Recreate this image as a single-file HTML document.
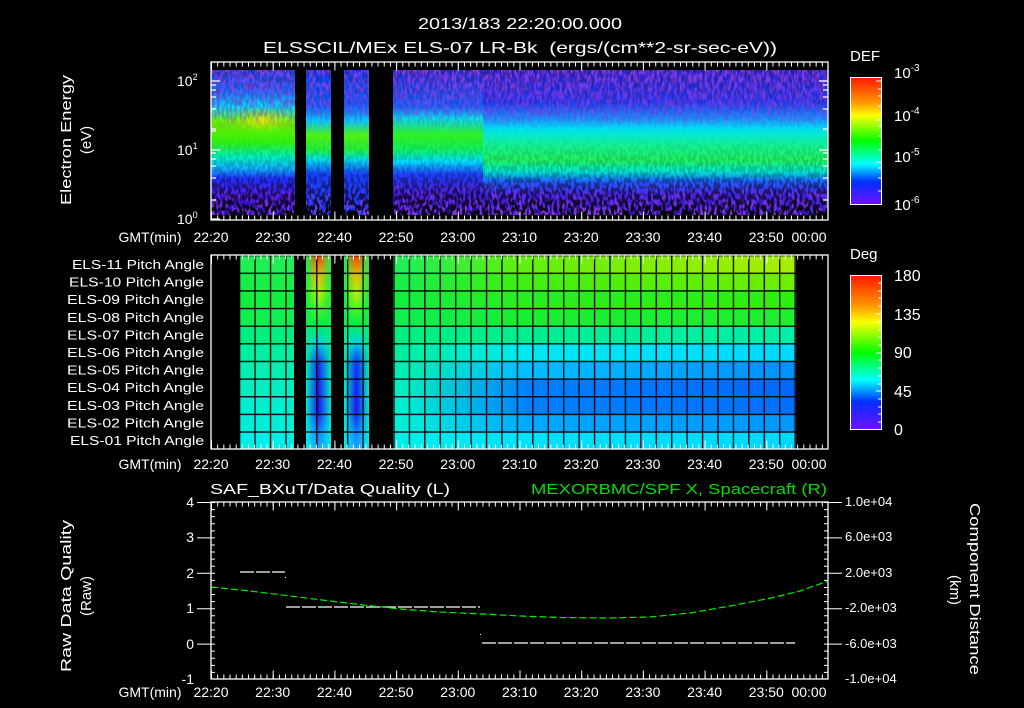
<!DOCTYPE html>
<html><head><meta charset="utf-8"><style>
html,body{margin:0;padding:0;background:#000;width:1024px;height:708px;overflow:hidden}
svg{display:block}
text{font-family:"Liberation Sans",sans-serif;fill:#fff}
</style></head><body>
<svg width="1024" height="708" viewBox="0 0 1024 708" xmlns="http://www.w3.org/2000/svg">
<defs>
<linearGradient id="cb" x1="0" y1="0" x2="0" y2="1">
<stop offset="0" stop-color="#ff1800"/><stop offset="0.2" stop-color="#ff9900"/><stop offset="0.3" stop-color="#ffff00"/>
<stop offset="0.5" stop-color="#00ff00"/><stop offset="0.68" stop-color="#00ffff"/><stop offset="0.82" stop-color="#0030ff"/>
<stop offset="1" stop-color="#7010ff"/></linearGradient>
<linearGradient id="sL" x1="0" y1="70" x2="0" y2="215" gradientUnits="userSpaceOnUse">
<stop offset="0" stop-color="#2a40f0"/><stop offset="0.15" stop-color="#1a70ff"/><stop offset="0.25" stop-color="#00e0ff"/>
<stop offset="0.36" stop-color="#70f000"/><stop offset="0.5" stop-color="#30f010"/><stop offset="0.6" stop-color="#00f0c0"/>
<stop offset="0.68" stop-color="#10b0ff"/><stop offset="0.75" stop-color="#2030ff"/><stop offset="0.88" stop-color="#3a10d0"/><stop offset="1" stop-color="#3010b0"/></linearGradient>
<linearGradient id="sM" x1="0" y1="70" x2="0" y2="215" gradientUnits="userSpaceOnUse">
<stop offset="0" stop-color="#1a40ff"/><stop offset="0.25" stop-color="#1060ff"/><stop offset="0.35" stop-color="#00d0ff"/>
<stop offset="0.45" stop-color="#50f010"/><stop offset="0.55" stop-color="#20f040"/><stop offset="0.62" stop-color="#00e0f0"/>
<stop offset="0.72" stop-color="#1840ff"/><stop offset="1" stop-color="#1030e0"/></linearGradient>
<linearGradient id="sR2" x1="0" y1="70" x2="0" y2="215" gradientUnits="userSpaceOnUse">
<stop offset="0" stop-color="#3528d8"/><stop offset="0.22" stop-color="#2838f0"/><stop offset="0.33" stop-color="#1890ff"/>
<stop offset="0.4" stop-color="#00e0f8"/><stop offset="0.5" stop-color="#10f0a0"/><stop offset="0.62" stop-color="#20f060"/><stop offset="0.7" stop-color="#00e8d0"/>
<stop offset="0.77" stop-color="#1a60ff"/><stop offset="0.86" stop-color="#3a20e0"/><stop offset="1" stop-color="#3510b0"/></linearGradient>
<linearGradient id="sC" x1="0" y1="70" x2="0" y2="215" gradientUnits="userSpaceOnUse">
<stop offset="0" stop-color="#3030e0"/><stop offset="0.25" stop-color="#1a60ff"/><stop offset="0.33" stop-color="#00e0f0"/>
<stop offset="0.45" stop-color="#30f020"/><stop offset="0.55" stop-color="#10f060"/><stop offset="0.63" stop-color="#00e0ff"/>
<stop offset="0.72" stop-color="#2040ff"/><stop offset="0.86" stop-color="#3a18d0"/><stop offset="1" stop-color="#3010b0"/></linearGradient>
<radialGradient id="yel" cx="0.5" cy="0.5" r="0.5"><stop offset="0" stop-color="#f0f000" stop-opacity="0.95"/><stop offset="1" stop-color="#a0f000" stop-opacity="0"/></radialGradient>
<filter id="spk" x="0" y="0" width="1" height="1">
<feTurbulence type="fractalNoise" baseFrequency="0.35 0.18" numOctaves="1" seed="3"/>
<feColorMatrix type="matrix" values="0 0 0 0 0  0 0 0 0 0  0 0 0 0 0  0 0 0 -9 5"/>
</filter>
<filter id="spk2" x="0" y="0" width="1" height="1">
<feTurbulence type="fractalNoise" baseFrequency="0.4 0.12" numOctaves="1" seed="11"/>
<feColorMatrix type="matrix" values="0 0 0 0 0.3  0 0 0 0 0.05  0 0 0 0 0.85  0 0 0 -10 5.5"/>
</filter>
<linearGradient id="spm" x1="0" y1="0" x2="0" y2="1"><stop offset="0" stop-color="#fff" stop-opacity="0.25"/><stop offset="0.45" stop-color="#fff" stop-opacity="0"/><stop offset="0.72" stop-color="#fff" stop-opacity="0.2"/><stop offset="1" stop-color="#fff" stop-opacity="1"/></linearGradient>
<mask id="spmask"><rect x="211" y="70" width="617" height="145" fill="url(#spm)"/></mask>
<linearGradient id="spm2" x1="0" y1="0" x2="0" y2="1"><stop offset="0" stop-color="#fff" stop-opacity="0.8"/><stop offset="0.3" stop-color="#fff" stop-opacity="0.4"/><stop offset="0.42" stop-color="#fff" stop-opacity="0"/><stop offset="0.75" stop-color="#fff" stop-opacity="0"/><stop offset="0.85" stop-color="#fff" stop-opacity="0.4"/><stop offset="1" stop-color="#fff" stop-opacity="0.8"/></linearGradient>
<mask id="spmask2"><rect x="211" y="70" width="617" height="145" fill="url(#spm2)"/></mask>
<linearGradient id="pstripe" x1="0" y1="255" x2="0" y2="449" gradientUnits="userSpaceOnUse">
<stop offset="0" stop-color="#ff3000"/><stop offset="0.1" stop-color="#ffb000"/><stop offset="0.2" stop-color="#c0f000"/>
<stop offset="0.35" stop-color="#00f040"/><stop offset="0.45" stop-color="#00d0f0"/><stop offset="0.55" stop-color="#1030ff"/>
<stop offset="0.8" stop-color="#2010ee"/><stop offset="0.92" stop-color="#1080ff"/><stop offset="1" stop-color="#20a0ff"/></linearGradient>
<linearGradient id="hm" x1="0" y1="0" x2="1" y2="0"><stop offset="0" stop-color="#fff" stop-opacity="0"/><stop offset="0.5" stop-color="#fff"/><stop offset="1" stop-color="#fff" stop-opacity="0"/></linearGradient>
<mask id="m1"><rect x="306" y="255" width="25" height="194" fill="url(#hm)"/></mask>
<mask id="m2"><rect x="344" y="255" width="25" height="194" fill="url(#hm)"/></mask>
<pattern id="grid" x="239" y="255" width="15.43" height="17.64" patternUnits="userSpaceOnUse">
<rect x="0" y="0" width="1.3" height="17.64" fill="#000"/><rect x="0" y="0" width="15.43" height="1.3" fill="#000"/></pattern>
</defs>

<text x="418" y="29" font-size="16" textLength="204" lengthAdjust="spacingAndGlyphs">2013/183 22:20:00.000</text>
<text x="263" y="53" font-size="16" textLength="514" lengthAdjust="spacingAndGlyphs" xml:space="preserve">ELSSCIL/MEx ELS-07 LR-Bk  (ergs/(cm**2-sr-sec-eV))</text>

<!-- Panel 1 -->
<rect x="211" y="70" width="84" height="145" fill="url(#sL)"/>
<ellipse cx="262" cy="120" rx="34" ry="13" fill="url(#yel)"/>
<rect x="306" y="70" width="25" height="145" fill="url(#sM)"/>
<rect x="344" y="70" width="25" height="145" fill="url(#sM)"/>
<rect x="393" y="70" width="90" height="145" fill="url(#sC)"/>
<rect x="483" y="70" width="345" height="145" fill="url(#sR2)"/>
<rect x="211" y="70" width="617" height="145" filter="url(#spk2)" mask="url(#spmask2)"/>
<rect x="211" y="70" width="617" height="145" filter="url(#spk)" mask="url(#spmask)"/>
<rect x="295" y="66" width="11" height="152" fill="#000"/>
<rect x="331" y="66" width="13" height="152" fill="#000"/>
<rect x="369" y="66" width="24" height="152" fill="#000"/>
<rect x="211" y="62" width="617" height="158" fill="none" stroke="#fff" stroke-width="1.3"/>
<line x1="211" y1="64" x2="828" y2="64" stroke="#fff" stroke-width="5" stroke-dasharray="1 5.17"/>
<line x1="211" y1="66" x2="828" y2="66" stroke="#fff" stroke-width="9" stroke-dasharray="1 60.7"/>
<line x1="211" y1="218" x2="828" y2="218" stroke="#fff" stroke-width="5" stroke-dasharray="1 5.17"/>
<line x1="211" y1="216" x2="828" y2="216" stroke="#fff" stroke-width="9" stroke-dasharray="1 60.7"/>
<g stroke="#fff" stroke-width="1.2">
<path d="M211 81h9M211 150h9M211 219h9M211 200h5M211 178h5M211 166h5M211 159h5M211 153h5M211 129h5M211 109h5M211 97h5M211 90h5M211 85h5M211 131h5"/>
<path d="M828 81h-9M828 150h-9M828 200h-5M828 178h-5M828 166h-5M828 159h-5M828 153h-5M828 129h-5M828 109h-5M828 97h-5M828 90h-5M828 85h-5"/>
</g>
<text x="177" y="86" font-size="14">10<tspan font-size="9" dy="-6">2</tspan></text>
<text x="177" y="155" font-size="14">10<tspan font-size="9" dy="-6">1</tspan></text>
<text x="177" y="224" font-size="14">10<tspan font-size="9" dy="-6">0</tspan></text>
<text transform="translate(71,140) rotate(-90)" text-anchor="middle" font-size="15" textLength="130" lengthAdjust="spacingAndGlyphs">Electron Energy</text>
<text transform="translate(91,140) rotate(-90)" text-anchor="middle" font-size="15">(eV)</text>

<text x="850" y="61" font-size="15">DEF</text>
<rect x="850.5" y="77.5" width="31" height="127" fill="url(#cb)" stroke="#fff" stroke-width="1"/>
<g stroke="#fff" stroke-width="1"><path d="M882 81h-6M882 89h-4M882 96h-4M882 106h-4M882 120h-6M882 126h-4M882 136h-4M882 150h-4M882 162h-6M882 168h-4M882 178h-4M882 191h-4"/></g>
<text x="894" y="78" font-size="15">10<tspan font-size="10" dy="-7">-3</tspan></text>
<text x="894" y="121" font-size="15">10<tspan font-size="10" dy="-7">-4</tspan></text>
<text x="894" y="162" font-size="15">10<tspan font-size="10" dy="-7">-5</tspan></text>
<text x="894" y="210" font-size="15">10<tspan font-size="10" dy="-7">-6</tspan></text>

<g font-size="14" text-anchor="middle">
<text x="150" y="242">GMT(min)</text>
<text x="211" y="242">22:20</text><text x="272.7" y="242">22:30</text><text x="334.4" y="242">22:40</text><text x="396.1" y="242">22:50</text><text x="457.8" y="242">23:00</text><text x="519.5" y="242">23:10</text><text x="581.2" y="242">23:20</text><text x="642.9" y="242">23:30</text><text x="704.6" y="242">23:40</text><text x="766.3" y="242">23:50</text><text x="809" y="242">00:00</text>
<text x="150" y="469">GMT(min)</text>
<text x="211" y="469">22:20</text><text x="272.7" y="469">22:30</text><text x="334.4" y="469">22:40</text><text x="396.1" y="469">22:50</text><text x="457.8" y="469">23:00</text><text x="519.5" y="469">23:10</text><text x="581.2" y="469">23:20</text><text x="642.9" y="469">23:30</text><text x="704.6" y="469">23:40</text><text x="766.3" y="469">23:50</text><text x="809" y="469">00:00</text>
<text x="150" y="697">GMT(min)</text>
<text x="211" y="697">22:20</text><text x="272.7" y="697">22:30</text><text x="334.4" y="697">22:40</text><text x="396.1" y="697">22:50</text><text x="457.8" y="697">23:00</text><text x="519.5" y="697">23:10</text><text x="581.2" y="697">23:20</text><text x="642.9" y="697">23:30</text><text x="704.6" y="697">23:40</text><text x="766.3" y="697">23:50</text><text x="809" y="697">00:00</text>
</g>

<!-- Panel 2 -->
<g>
<defs>
<linearGradient id="r0" x1="240" x2="796" gradientUnits="userSpaceOnUse"><stop offset="0.3" stop-color="#20ee55"/><stop offset="0.5" stop-color="#60ee10"/><stop offset="1" stop-color="#a8ee00"/></linearGradient>
<linearGradient id="r1" x1="240" x2="796" gradientUnits="userSpaceOnUse"><stop offset="0.3" stop-color="#18ee48"/><stop offset="0.5" stop-color="#40ee10"/><stop offset="1" stop-color="#70ee00"/></linearGradient>
<linearGradient id="r2" x1="240" x2="796" gradientUnits="userSpaceOnUse"><stop offset="0.3" stop-color="#10ee40"/><stop offset="0.5" stop-color="#28ee20"/><stop offset="1" stop-color="#30ee10"/></linearGradient>
<linearGradient id="r3" x1="240" x2="796" gradientUnits="userSpaceOnUse"><stop offset="0.3" stop-color="#10ee50"/><stop offset="0.5" stop-color="#18ee30"/><stop offset="1" stop-color="#20ee30"/></linearGradient>
<linearGradient id="r4" x1="240" x2="796" gradientUnits="userSpaceOnUse"><stop offset="0.3" stop-color="#00ee80"/><stop offset="0.5" stop-color="#00ee90"/><stop offset="1" stop-color="#00eea8"/></linearGradient>
<linearGradient id="r5" x1="240" x2="796" gradientUnits="userSpaceOnUse"><stop offset="0.3" stop-color="#00eea0"/><stop offset="0.5" stop-color="#00e8f0"/><stop offset="1" stop-color="#00d8ff"/></linearGradient>
<linearGradient id="r6" x1="240" x2="796" gradientUnits="userSpaceOnUse"><stop offset="0.3" stop-color="#00eeb0"/><stop offset="0.5" stop-color="#00c0ff"/><stop offset="1" stop-color="#0090ff"/></linearGradient>
<linearGradient id="r7" x1="240" x2="796" gradientUnits="userSpaceOnUse"><stop offset="0.3" stop-color="#00eec0"/><stop offset="0.52" stop-color="#0080ff"/><stop offset="1" stop-color="#0068ff"/></linearGradient>
<linearGradient id="r8" x1="240" x2="796" gradientUnits="userSpaceOnUse"><stop offset="0.3" stop-color="#00eed0"/><stop offset="0.52" stop-color="#0080ff"/><stop offset="1" stop-color="#0070ff"/></linearGradient>
<linearGradient id="r9" x1="240" x2="796" gradientUnits="userSpaceOnUse"><stop offset="0.3" stop-color="#00eed8"/><stop offset="0.52" stop-color="#00a8ff"/><stop offset="1" stop-color="#0098ff"/></linearGradient>
<linearGradient id="r10" x1="240" x2="796" gradientUnits="userSpaceOnUse"><stop offset="0.3" stop-color="#00eee8"/><stop offset="0.52" stop-color="#00e0ff"/><stop offset="1" stop-color="#00d8ff"/></linearGradient>
</defs>
<rect x="240" y="255" width="556" height="17.64" fill="url(#r0)"/>
<rect x="240" y="272.64" width="556" height="17.64" fill="url(#r1)"/>
<rect x="240" y="290.28" width="556" height="17.64" fill="url(#r2)"/>
<rect x="240" y="307.92" width="556" height="17.64" fill="url(#r3)"/>
<rect x="240" y="325.56" width="556" height="17.64" fill="url(#r4)"/>
<rect x="240" y="343.2" width="556" height="17.64" fill="url(#r5)"/>
<rect x="240" y="360.84" width="556" height="17.64" fill="url(#r6)"/>
<rect x="240" y="378.48" width="556" height="17.64" fill="url(#r7)"/>
<rect x="240" y="396.12" width="556" height="17.64" fill="url(#r8)"/>
<rect x="240" y="413.76" width="556" height="17.64" fill="url(#r9)"/>
<rect x="240" y="431.4" width="556" height="17.6" fill="url(#r10)"/>
<rect x="306" y="255" width="25" height="194" fill="url(#pstripe)" mask="url(#m1)"/>
<rect x="344" y="255" width="25" height="194" fill="url(#pstripe)" mask="url(#m2)"/>
<rect x="240" y="255" width="556" height="194" fill="url(#grid)"/>
<rect x="294" y="255" width="12" height="194" fill="#000"/>
<rect x="331" y="255" width="13" height="194" fill="#000"/>
<rect x="369" y="255" width="24" height="194" fill="#000"/>
</g>
<rect x="211" y="255" width="617" height="194" fill="none" stroke="#fff" stroke-width="1.3"/>
<line x1="211" y1="257" x2="828" y2="257" stroke="#fff" stroke-width="5" stroke-dasharray="1 5.17"/>
<line x1="211" y1="259" x2="828" y2="259" stroke="#fff" stroke-width="9" stroke-dasharray="1 60.7"/>
<line x1="211" y1="447" x2="828" y2="447" stroke="#fff" stroke-width="5" stroke-dasharray="1 5.17"/>
<line x1="211" y1="445" x2="828" y2="445" stroke="#fff" stroke-width="9" stroke-dasharray="1 60.7"/>
<g font-size="13">
<text x="72" y="269" textLength="132" lengthAdjust="spacingAndGlyphs">ELS-11 Pitch Angle</text>
<text x="69" y="286.5" textLength="135" lengthAdjust="spacingAndGlyphs">ELS-10 Pitch Angle</text>
<text x="67" y="304" textLength="137" lengthAdjust="spacingAndGlyphs">ELS-09 Pitch Angle</text>
<text x="67" y="322" textLength="137" lengthAdjust="spacingAndGlyphs">ELS-08 Pitch Angle</text>
<text x="67" y="339.5" textLength="137" lengthAdjust="spacingAndGlyphs">ELS-07 Pitch Angle</text>
<text x="67" y="357" textLength="137" lengthAdjust="spacingAndGlyphs">ELS-06 Pitch Angle</text>
<text x="67" y="374.5" textLength="137" lengthAdjust="spacingAndGlyphs">ELS-05 Pitch Angle</text>
<text x="67" y="392" textLength="137" lengthAdjust="spacingAndGlyphs">ELS-04 Pitch Angle</text>
<text x="67" y="410" textLength="137" lengthAdjust="spacingAndGlyphs">ELS-03 Pitch Angle</text>
<text x="67" y="427.5" textLength="137" lengthAdjust="spacingAndGlyphs">ELS-02 Pitch Angle</text>
<text x="70" y="445" textLength="134" lengthAdjust="spacingAndGlyphs">ELS-01 Pitch Angle</text>
</g>

<text x="850" y="259" font-size="15">Deg</text>
<rect x="850.5" y="275.5" width="31" height="154" fill="url(#cb)" stroke="#fff" stroke-width="1"/>
<g stroke="#fff" stroke-width="1"><path d="M882 283h-4M882 291h-4M882 298h-4M882 306h-4M882 314h-6M882 322h-4M882 330h-4M882 337h-4M882 345h-4M882 353h-6M882 360h-4M882 368h-4M882 376h-4M882 384h-4M882 391h-6M882 399h-4M882 407h-4M882 414h-4M882 422h-4"/></g>
<g font-size="16"><text x="894" y="281">180</text><text x="894" y="320">135</text><text x="894" y="358">90</text><text x="894" y="397">45</text><text x="894" y="435">0</text></g>

<!-- Panel 3 -->
<text x="210" y="494" font-size="15" textLength="240" lengthAdjust="spacingAndGlyphs">SAF_BXuT/Data Quality (L)</text>
<text x="531" y="494" font-size="15" style="fill:#00dd00" textLength="296" lengthAdjust="spacingAndGlyphs">MEXORBMC/SPF X, Spacecraft (R)</text>
<rect x="211" y="502" width="617" height="177" fill="none" stroke="#fff" stroke-width="1.3"/>
<line x1="211" y1="504" x2="828" y2="504" stroke="#fff" stroke-width="5" stroke-dasharray="1 5.17"/>
<line x1="211" y1="506" x2="828" y2="506" stroke="#fff" stroke-width="9" stroke-dasharray="1 60.7"/>
<line x1="211" y1="677" x2="828" y2="677" stroke="#fff" stroke-width="5" stroke-dasharray="1 5.17"/>
<line x1="211" y1="675" x2="828" y2="675" stroke="#fff" stroke-width="9" stroke-dasharray="1 60.7"/>
<line x1="213" y1="502" x2="213" y2="679" stroke="#fff" stroke-width="4" stroke-dasharray="1 6.08"/>
<line x1="204" y1="502" x2="204" y2="679" stroke="#fff" stroke-width="14" stroke-dasharray="1 34.4"/>
<line x1="826" y1="502" x2="826" y2="679" stroke="#fff" stroke-width="4" stroke-dasharray="1 6.08"/>
<line x1="835" y1="502" x2="835" y2="679" stroke="#fff" stroke-width="14" stroke-dasharray="1 34.4"/>
<g font-size="14" text-anchor="end"><text x="194" y="507">4</text><text x="194" y="542">3</text><text x="194" y="578">2</text><text x="194" y="613">1</text><text x="194" y="649">0</text><text x="194" y="684">-1</text></g>
<text transform="translate(71,596) rotate(-90)" text-anchor="middle" font-size="15" textLength="152" lengthAdjust="spacingAndGlyphs">Raw Data Quality</text>
<text transform="translate(91,596) rotate(-90)" text-anchor="middle" font-size="15">(Raw)</text>
<g font-size="13"><text x="845" y="506">1.0e+04</text><text x="845" y="541">6.0e+03</text><text x="845" y="577">2.0e+03</text><text x="845" y="612">-2.0e+03</text><text x="845" y="648">-6.0e+03</text><text x="845" y="683">-1.0e+04</text></g>
<text transform="translate(970,589) rotate(90)" text-anchor="middle" font-size="15" textLength="172" lengthAdjust="spacingAndGlyphs">Component Distance</text>
<text transform="translate(950,590) rotate(90)" text-anchor="middle" font-size="15">(km)</text>
<g stroke="#fff" stroke-width="1.2" stroke-dasharray="14 2">
<line x1="240" y1="572" x2="285" y2="572"/>
<line x1="286" y1="607" x2="480" y2="607"/>
<line x1="482" y1="643" x2="795" y2="643"/>
</g>
<rect x="285" y="577" width="1" height="1" fill="#fff"/><rect x="480" y="634" width="1" height="1" fill="#fff"/>
<polyline fill="none" stroke="#00ee00" stroke-width="1.2" stroke-dasharray="7 3" points="211,587 250,591 290,596 330,601 363,605 400,609 440,612 482,614 520,616 560,617.5 608,618 650,617 690,613 730,606 771,598 800,591 828,581"/>
</svg>
</body></html>
